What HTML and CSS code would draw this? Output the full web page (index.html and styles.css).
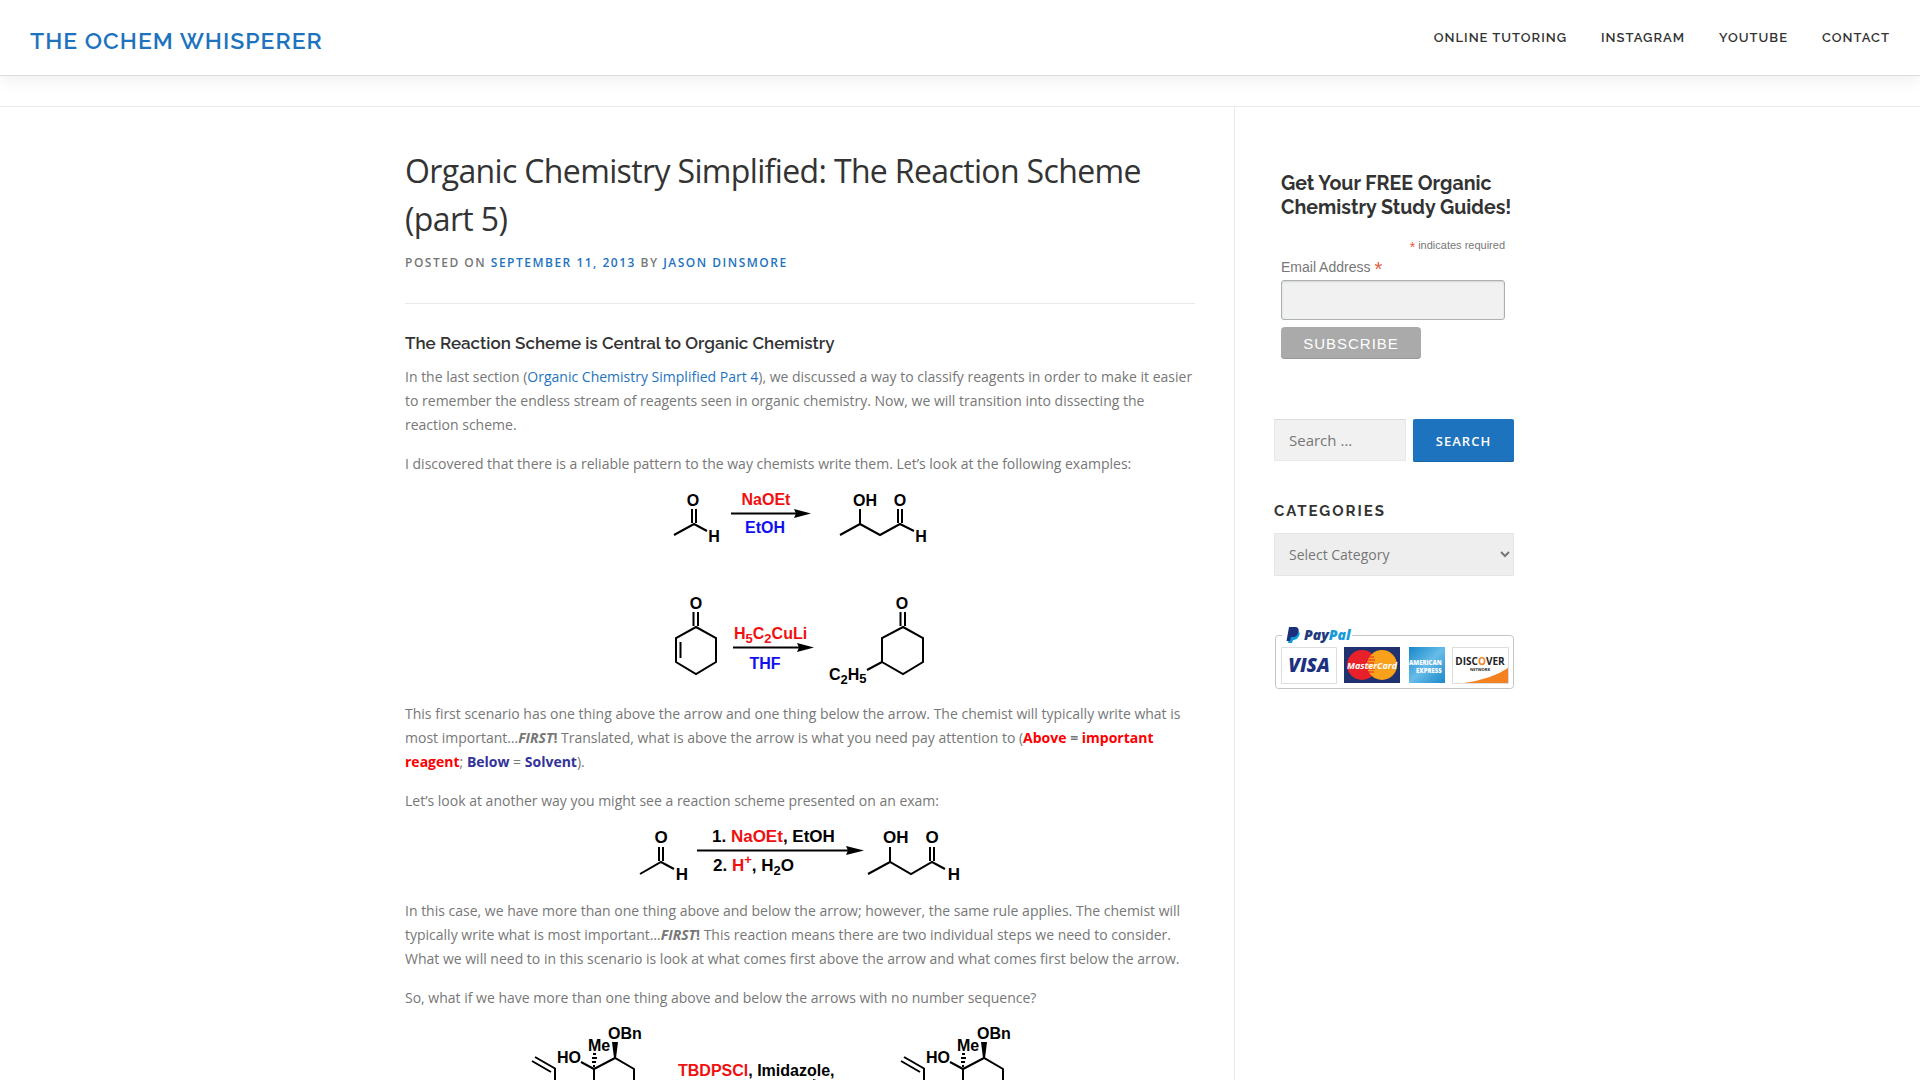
FILE: index.html
```html
<!DOCTYPE html>
<html lang="en">
<head>
<meta charset="utf-8">
<meta name="viewport" content="width=device-width, initial-scale=1">
<title>Organic Chemistry Simplified: The Reaction Scheme (part 5)</title>
<link rel="stylesheet" href="styles.css">
</head>
<body>
<header class="site-header">
  <a class="site-title" href="#">THE OCHEM WHISPERER</a>
  <nav class="site-nav">
    <a href="#">ONLINE TUTORING</a>
    <a href="#">INSTAGRAM</a>
    <a href="#">YOUTUBE</a>
    <a href="#">CONTACT</a>
  </nav>
</header>
<div class="page-strip"></div>
<div class="container">
  <main class="content">
    <article>
      <header class="entry-header">
        <h1>Organic Chemistry Simplified: The Reaction Scheme (part 5)</h1>
        <div class="entry-meta">Posted on <a href="#">September 11, 2013</a> by <a href="#">Jason Dinsmore</a></div>
      </header>
      <h2>The Reaction Scheme is Central to Organic Chemistry</h2>
      <p>In the last section (<a href="#">Organic Chemistry Simplified Part 4</a>), we discussed a way to classify reagents in order to make it easier to remember the endless stream of reagents seen in organic chemistry. Now, we will transition into dissecting the reaction scheme.</p>
      <p>I discovered that there is a reliable pattern to the way chemists write them. Let’s look at the following examples:</p>
      <figure>
        <svg class="scheme" width="260" height="196" viewBox="10 11 260 196" role="img" aria-label="Two reactions with the reagent above and the solvent below the arrow">
          <g class="bond">
            <path d="M14 55L34 44L47 51M32 29V43M36 29V43M71 33.5H136"/>
            <path d="M180 55L200 44L220 55L240 44L254 51M200 29V44M238 29V43M242 29V43"/>
            <path d="M36 147L56 158V182L36 194L16 182V158ZM20.5 162V178M33.5 132V146M38 132V146M73 167.5H139"/>
            <path d="M243 147L263 158V182L243 194L222 182V158ZM222 182L207 190M240.5 132V146M245 132V146"/>
          </g>
          <path d="M134 29L151 33.5L134 38L136 33.5ZM137 163L154 167.5L137 172L139 167.5Z"/>
          <text class="mid" x="33" y="26">O</text><text class="mid" x="54" y="62">H</text>
          <text class="mid red" x="106" y="25">NaOEt</text><text class="mid blue" x="105" y="53">EtOH</text>
          <text x="193" y="26">OH</text><text class="mid" x="240" y="26">O</text><text class="mid" x="261" y="62">H</text>
          <text class="mid" x="36" y="129">O</text><text class="mid" x="242" y="129">O</text>
          <text class="red" x="74" y="159">H<tspan class="sub" dy="4">5</tspan><tspan dy="-4">C</tspan><tspan class="sub" dy="4">2</tspan><tspan dy="-4">CuLi</tspan></text>
          <text class="mid blue" x="105" y="189">THF</text>
          <text x="169" y="200">C<tspan class="sub" dy="4">2</tspan><tspan dy="-4">H</tspan><tspan class="sub" dy="3">5</tspan></text>
        </svg>
      </figure>
      <p>This first scenario has one thing above the arrow and one thing below the arrow. The chemist will typically write what is most important…<strong><em>FIRST</em>!</strong> Translated, what is above the arrow is what you need pay attention to (<strong><span class="reagent">Above</span> = <span class="reagent">important reagent</span></strong>; <strong class="solvent">Below</strong> = <strong class="solvent">Solvent</strong>).</p>
      <p>Let’s look at another way you might see a reaction scheme presented on an exam:</p>
      <figure>
        <svg class="scheme large" width="328" height="56" viewBox="16 13 328 56" role="img" aria-label="A two-step reaction with numbered reagents">
          <g class="bond">
            <path d="M20 59L41 47L54 54M39 32V46M43 32V46M77 35.5H230"/>
            <path d="M248 59L270 47L291 59L312 47L325 54M270 32V47M310 32V46M314 32V46"/>
          </g>
          <path d="M226 31L244 35.5L226 40L228 35.5Z"/>
          <text class="mid" x="41" y="28">O</text><text class="mid" x="62" y="65">H</text>
          <text x="92" y="27">1. <tspan class="red">NaOEt</tspan>, EtOH</text>
          <text x="93" y="56">2. <tspan class="red">H</tspan><tspan class="sub red" dy="-7">+</tspan><tspan dy="7">, H</tspan><tspan class="sub" dy="4">2</tspan><tspan dy="-4">O</tspan></text>
          <text x="263" y="28">OH</text><text class="mid" x="312" y="28">O</text><text class="mid" x="334" y="65">H</text>
        </svg>
      </figure>
      <p>In this case, we have more than one thing above and below the arrow; however, the same rule applies. The chemist will typically write what is most important…<strong><em>FIRST</em>!</strong> This reaction means there are two individual steps we need to consider. What we will need to in this scenario is look at what comes first above the arrow and what comes first below the arrow.</p>
      <p>So, what if we have more than one thing above and below the arrows with no number sequence?</p>
      <figure>
        <svg class="scheme" width="560" height="55" viewBox="20 15 560 55" role="img" aria-label="Silyl protection with TBDPSCl and imidazole">
          <defs>
            <g id="substrate">
              <path class="bond" d="M35 47L55 58.5V75M32 51L51 62M81 52L94 59L115 48L134 59V75M94 59V75M93 44H96M92 48H97M92 52H96M93 56H95"/>
              <path d="M112 32H118L116 48H114Z"/>
              <text x="57" y="53">HO</text><text x="88" y="41">Me</text><text x="108" y="29">OBn</text>
            </g>
          </defs>
          <use href="#substrate"/>
          <use href="#substrate" x="369"/>
          <text x="178" y="66"><tspan class="red">TBDPSCl</tspan>, Imidazole,</text>
          <path d="M313 69L320 71H313Z"/>
        </svg>
      </figure>
    </article>
  </main>
  <aside class="sidebar">
    <form class="signup">
      <h2>Get Your FREE Organic Chemistry Study Guides!</h2>
      <div class="required-note"><span class="star">*</span> indicates required</div>
      <label for="email">Email Address <span class="star">*</span></label>
      <input id="email" type="email">
      <button type="button">SUBSCRIBE</button>
    </form>
    <form class="search">
      <input type="search" placeholder="Search …" aria-label="Search for:">
      <button type="button">SEARCH</button>
    </form>
    <section class="categories">
      <h2><label for="cat">CATEGORIES</label></h2>
      <select id="cat"><option>Select Category</option></select>
    </section>
    <svg class="cards" width="240" height="64" viewBox="14 11 240 64" role="img" aria-label="PayPal, Visa, MasterCard, American Express, Discover">
      <rect x="15.500" y="20.500" width="238" height="53" rx="3" fill="#fff" stroke="#c4c4c4"/>
      <path fill="#fff" d="M22 17H92V24H22Z"/>
      <path fill="#0a9bdc" d="M31 15H37Q41 17 39 21Q37 25 33 25L32 28H28Z"/>
      <path fill="#1b2f7c" d="M29 12H36Q40 13 38 18Q37 22 33 22H31L30 26H26.500Z"/>
      <text class="paypal" x="44" y="25" fill="#213a80">Pay<tspan fill="#159ad8">Pal</tspan></text>
      <path fill="#fff" stroke="#ddd" d="M21.500 32.500H76.500V68.500H21.500ZM192.500 32.500H248.500V68.500H192.500Z"/>
      <text class="visa" x="49" y="57">VISA</text>
      <path fill="#20316f" d="M84 32H140V68H84Z"/>
      <circle cx="102" cy="50" r="15" fill="#e8202a"/><circle cx="122" cy="50" r="15" fill="#f9a11b"/>
      <path stroke="#e8202a" stroke-width="1" d="M109 42H114M107 45H115M107 48H114M107 54H115M108 57H114"/>
      <text class="mastercard" x="112" y="54">MasterCard</text>
      <defs><linearGradient id="amex" x1="0" y1="0" x2="1" y2="1"><stop offset="0" stop-color="#1787c9"/><stop offset=".5" stop-color="#67bce9"/><stop offset="1" stop-color="#1b88c8"/></linearGradient></defs>
      <path fill="url(#amex)" d="M149 32H185V68H149Z"/>
      <text class="amex" x="149" y="50">AMERICAN</text><text class="amex" x="156" y="58">EXPRESS</text>
      <text class="discover" x="220" y="50">DISC<tspan fill="#f58220">O</tspan>VER</text>
      <text class="network" x="220" y="56">NETWORK</text>
      <path fill="#f58220" d="M204 68Q232 64 248 53V68Z"/>
    </svg>
  </aside>
</div>
</body>
</html>
```
FILE: styles.css
```css
* { box-sizing: border-box; }
body {
  margin: 0;
  background: #fff;
  color: #777;
  font: 14px/24px "Open Sans", "Noto Sans", sans-serif;
}
a { color: #1e73be; text-decoration: none; }
h1, h2, p, figure { margin: 0; }
h2, .site-header { font-family: Raleway, Lato, sans-serif; color: #333; }

.site-header {
  position: relative;
  display: flex;
  justify-content: space-between;
  align-items: center;
  min-height: 76px;
  padding: 0 30px;
  border-bottom: 1px solid #ddd;
  box-shadow: 0 5px 15px rgba(0, 0, 0, .06);
}
.site-title { padding-top: 7px; font-size: 23px; font-weight: 600; letter-spacing: 1px; }
.site-nav { display: flex; flex-wrap: wrap; gap: 0 34px; font-size: 13px; font-weight: 600; letter-spacing: 1px; }
.site-nav a { color: #333; }
.page-strip { height: 31px; border-bottom: 1px solid #e9e9e9; }

.container {
  display: flex;
  max-width: 1140px;
  margin: 0 auto;
  padding: 0 15px;
}
.content { flex: 1; min-width: 0; padding: 40px 39px 0 0; border-right: 1px solid #e9e9e9; }
.entry-header { padding-bottom: 28px; margin-bottom: 27px; border-bottom: 1px solid #e9e9e9; }
h1 { font-size: 32px; font-weight: 400; line-height: 48px; letter-spacing: -0.02em; color: #333; }
.entry-meta { padding-top: 8px; font-size: 12px; font-weight: 600; letter-spacing: 0.125em; text-transform: uppercase; }
article h2 { margin-bottom: 10px; font-size: 17px; font-weight: 600; line-height: 24px; }
p, figure { margin-bottom: 15px; }
figure:last-child { margin-bottom: 0; }
.reagent { color: #f00; }
.solvent { color: #339; }

.scheme { display: block; max-width: 100%; margin: 0 auto; fill: #000; font: bold 16px "Liberation Sans", Arial, sans-serif; }
.large { font-size: 17px; }
.bond { fill: none; stroke: #000; stroke-width: 2; }
.mid { text-anchor: middle; }
.sub { font-size: 13px; }
.red { fill: #f01010; }
.blue { fill: #1010f0; }

.sidebar { width: 280px; padding: 65px 1px 0 39px; }
.signup { display: flex; flex-direction: column; align-items: flex-start; padding: 0 9px 0 7px; font-family: "Liberation Sans", Arial, sans-serif; }
.signup h2 { margin-right: -9px; font-size: 1.4em; font-weight: 700; line-height: 24px; }
.required-note { align-self: flex-end; margin-top: 15px; font-size: 11px; line-height: 20px; }
.star { color: #e85c41; }
.required-note .star { font-size: 14px; line-height: 16px; vertical-align: bottom; }
.signup label { line-height: 24px; }
.signup label .star { font-size: 20px; line-height: 20px; vertical-align: bottom; }
.signup input { width: 100%; height: 40px; margin-top: 1px; border: 1px solid #abb0b2; border-radius: 3px; background: #f1f1f1; box-shadow: inset 0 1px 2px rgba(0, 0, 0, .12); }
.signup button { width: 140px; height: 32px; margin-top: 7px; border: 0; border-radius: 4px; background: #aaa; box-shadow: inset 0 -1px #999; color: #fff; font: 15px "Liberation Sans", Arial, sans-serif; letter-spacing: 1px; }

.search { display: flex; gap: 7px; margin-top: 60px; align-items: flex-start; }
.search input { flex: 1; min-width: 0; height: 42px; padding: 0 14px; border: 1px solid #e9e9e9; border-top-color: #ddd; background: #f1f1f1; font: 15px "Open Sans", sans-serif; }
.search input::placeholder { color: #777; }
.search button { width: 101px; height: 43px; border: 0; border-radius: 2px; background: #1e73be; box-shadow: inset 0 -1px #1a65a8; color: #fff; font: 600 13px "Open Sans", sans-serif; letter-spacing: 1px; }
.categories h2 { margin: 37px 0 10px; font-size: 15px; font-weight: 700; letter-spacing: 2px; }
.categories select { display: block; width: 100%; height: 43px; padding: 0 10px; border: 1px solid #e6e6e6; border-radius: 0; background: #eee; color: #777; font: 14px "Open Sans", sans-serif; }

.cards { display: block; max-width: 100%; margin-top: 50px; font: bold 10px "Open Sans", sans-serif; }
.paypal { font-size: 14px; font-style: italic; font-weight: 800; }
.visa { font-size: 19px; font-style: italic; font-weight: 800; fill: #1d3181; text-anchor: middle; }
.mastercard { font-size: 9px; font-style: italic; fill: #fff; text-anchor: middle; }
.amex { font-size: 6px; font-weight: 800; fill: #fff; }
.discover { font-size: 10px; fill: #222; text-anchor: middle; }
.network { font-size: 4px; fill: #222; text-anchor: middle; }
@media (max-width: 900px) {
  .container { flex-direction: column; }
  .content { border-right: 0; padding-right: 0; }
}
```
